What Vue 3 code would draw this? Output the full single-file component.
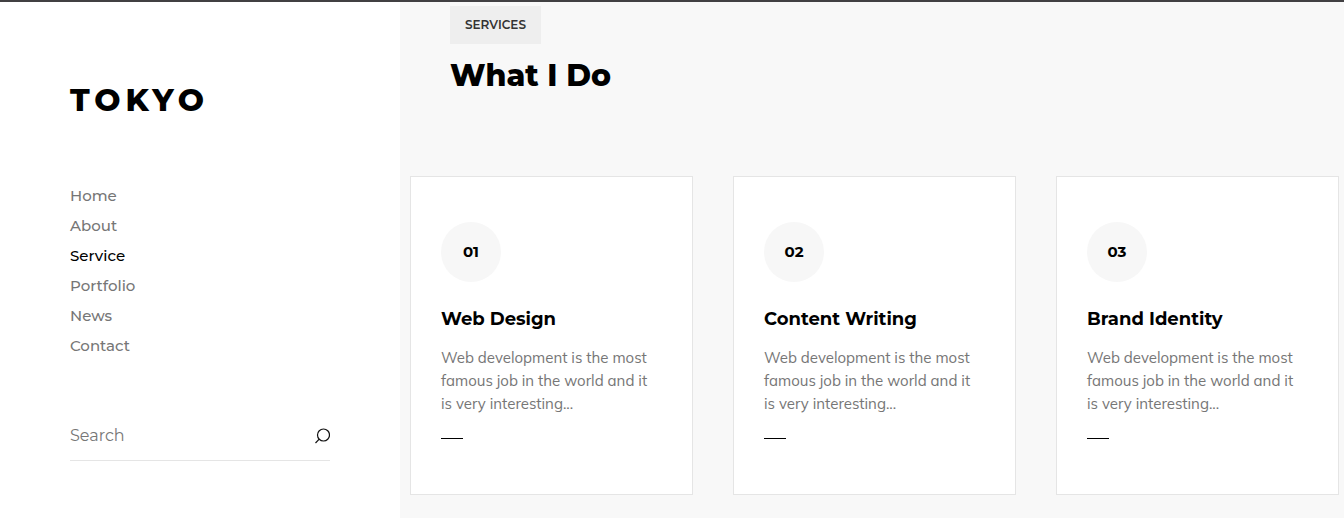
<script setup>
import { ref } from 'vue'

const query = ref('')
const active = 'Service'
const links = ['Home', 'About', 'Service', 'Portfolio', 'News', 'Contact']
const services = [
  { number: '01', title: 'Web Design' },
  { number: '02', title: 'Content Writing' },
  { number: '03', title: 'Brand Identity' },
]
const summary = 'Web development is the most famous job in the world and it is very interesting...'
</script>

<template>
  <div class="page">
    <aside class="sidebar">
      <a class="logo" href="#home">TOKYO</a>
      <nav class="menu" aria-label="Main">
        <a
          v-for="link in links"
          :key="link"
          :href="'#' + link.toLowerCase()"
          :class="['menu-link', { active: link === active }]"
        >{{ link }}</a>
      </nav>
      <form class="search" role="search" @submit.prevent>
        <input v-model="query" class="search-input" type="text" placeholder="Search" aria-label="Search" />
        <button class="search-button" type="submit" aria-label="Submit search">
          <svg viewBox="0 0 16 16" width="16" height="16" aria-hidden="true">
            <circle cx="9.5" cy="7" r="6" />
            <path d="M5.2 11.2 1.5 15" />
          </svg>
        </button>
      </form>
    </aside>

    <main class="content">
      <header class="heading">
        <span class="tag">SERVICES</span>
        <h1 class="title">What I Do</h1>
      </header>
      <section class="cards">
        <article v-for="service in services" :key="service.number" class="card">
          <span class="number">{{ service.number }}</span>
          <h2 class="card-title">{{ service.title }}</h2>
          <p class="card-text">{{ summary }}</p>
          <a class="more" href="#service" :aria-label="'More about ' + service.title"></a>
        </article>
      </section>
    </main>
  </div>
</template>

<style>
body {
  margin: 0;
}
</style>

<style scoped>
.page {
  display: flex;
  box-sizing: border-box;
  min-height: 100vh;
  border-top: 2px solid #414042;
  background: #f8f8f8;
  font-family: Montserrat, Inter, "Liberation Sans", sans-serif;
  color: #000;
}

.sidebar {
  display: flex;
  flex: 0 0 400px;
  flex-direction: column;
  box-sizing: border-box;
  padding: 78px 70px 40px;
  background: #fff;
}

.logo {
  align-self: flex-start;
  font-size: 31px;
  font-weight: 800;
  line-height: 40px;
  letter-spacing: 5px;
  color: #000;
  text-decoration: none;
}

.menu {
  display: flex;
  flex-direction: column;
  align-items: flex-start;
  margin-top: 61px;
}

.menu-link {
  font-size: 15px;
  font-weight: 500;
  line-height: 30px;
  color: #767676;
  text-decoration: none;
}

.menu-link.active {
  color: #000;
}

.search {
  display: flex;
  align-items: center;
  height: 49px;
  margin-top: 50px;
  border-bottom: 1px solid #e5e5e5;
}

.search-input {
  flex: 1;
  min-width: 0;
  padding: 0;
  border: 0;
  outline: 0;
  background: none;
  font: inherit;
  font-size: 16px;
  line-height: 30px;
  color: #000;
}

.search-input::placeholder {
  color: #767676;
  opacity: 1;
}

.search-button {
  display: flex;
  padding: 0;
  border: 0;
  background: none;
  cursor: pointer;
}

.search-button svg {
  fill: none;
  stroke: #111;
  stroke-width: 1.2;
}

.content {
  flex: 1;
  min-width: 0;
  padding: 4px 5px 23px 10px;
}

.heading {
  padding-left: 40px;
}

.tag {
  display: inline-block;
  padding: 0 15px;
  background: #eee;
  font-size: 12px;
  font-weight: 600;
  line-height: 38px;
  color: #333;
  vertical-align: top;
}

.title {
  margin: 12px 0 0;
  font-size: 30px;
  font-weight: 800;
  line-height: 40px;
}

.cards {
  display: grid;
  grid-template-columns: repeat(3, minmax(0, 1fr));
  gap: 40px;
  margin-top: 80px;
}

.card {
  padding: 45px 30px 55px;
  border: 1px solid #e5e5e5;
  background: #fff;
}

.number {
  display: block;
  width: 60px;
  border-radius: 50%;
  background: #f7f7f7;
  font-size: 15px;
  font-weight: 700;
  line-height: 60px;
  text-align: center;
}

.card-title {
  margin: 22px 0 12px;
  font-size: 18px;
  font-weight: 700;
  line-height: 30px;
}

.card-text {
  margin: 0;
  font-family: Mulish, Lato, "Open Sans", sans-serif;
  font-size: 15px;
  line-height: 23px;
  color: #767676;
}

.more {
  display: block;
  width: 22px;
  height: 1px;
  margin-top: 23px;
  background: #000;
}
</style>
